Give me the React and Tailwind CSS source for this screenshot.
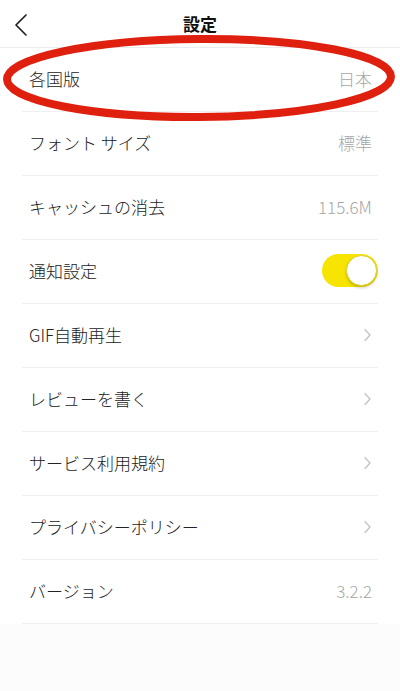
import React from 'react';

const font = { fontFamily: '"Noto Sans CJK JP", "Noto Sans", sans-serif' };

/* ── Row pieces ───────────────────────────────────────────── */

function Chevron() {
  return (
    <svg width="9" height="14" viewBox="0 0 9 14" fill="none" stroke="#c4c4c8" strokeWidth="1.4" strokeLinecap="round" strokeLinejoin="round">
      <polyline points="2 1.5 7 7 2 12.5" />
    </svg>
  );
}

function Toggle({ on }) {
  return (
    <div className={`-mr-[6px] flex h-[33px] w-[56px] items-center rounded-full p-[1px] ${on ? 'justify-end bg-[#f7e400]' : 'justify-start bg-[#e5e5e5]'}`}>
      <div className="h-[31px] w-[31px] rounded-full border border-[#d8cf3a] bg-white shadow-[0_2px_3px_rgba(0,0,0,0.18)]" />
    </div>
  );
}

function Row({ label, value, kind }) {
  return (
    <div className="flex h-16 items-center justify-between border-b border-[#efefef] pb-[2px] pl-[7px] pr-[6px]">
      <span className="text-[17px] font-light text-[#222222]">{label}</span>
      {kind === 'toggle' && <Toggle on />}
      {kind === 'chevron' && <Chevron />}
      {value && <span className="text-[17px] font-light text-[#a6a6a6]">{value}</span>}
    </div>
  );
}

const rows = [
  { label: '各国版', value: '日本' },
  { label: 'フォント サイズ', value: '標準' },
  { label: 'キャッシュの消去', value: '115.6M' },
  { label: '通知設定', kind: 'toggle' },
  { label: 'GIF自動再生', kind: 'chevron' },
  { label: 'レビューを書く', kind: 'chevron' },
  { label: 'サービス利用規約', kind: 'chevron' },
  { label: 'プライバシーポリシー', kind: 'chevron' },
  { label: 'バージョン', value: '3.2.2' },
];

export default function App() {
  return (
    <div className="relative h-[691px] w-[400px] overflow-hidden bg-[#fcfcfc]" style={font}>
      {/* Header */}
      <div className="relative flex h-[48px] items-center justify-center border-b border-[#ececec] bg-white">
        <button className="absolute left-[12px] top-[11px] p-[2px]" aria-label="back">
          <svg width="14" height="24" viewBox="0 0 14 24" fill="none" stroke="#222" strokeWidth="1.7" strokeLinecap="round" strokeLinejoin="round">
            <polyline points="12 2 2 12 12 22" />
          </svg>
        </button>
        <h1 className="text-[17px] font-bold text-[#111]">設定</h1>
      </div>

      {/* Settings list */}
      <div className="bg-white px-[22px]">
        {rows.map((r) => (
          <Row key={r.label} {...r} />
        ))}
      </div>

      {/* Red annotation ellipse */}
      <svg className="pointer-events-none absolute left-0 top-0" width="400" height="130" viewBox="0 0 400 130">
        <ellipse cx="199" cy="78" rx="192" ry="39" fill="none" stroke="#e0200f" strokeWidth="8" transform="rotate(-0.4 199 78)" />
      </svg>
    </div>
  );
}
